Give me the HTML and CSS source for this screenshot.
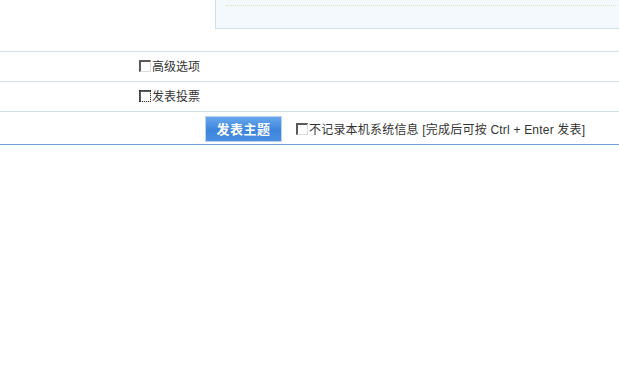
FILE: index.html
```
<!DOCTYPE html>
<html lang="zh-CN">
<head>
  <meta charset="UTF-8">
  <title>发表主题</title>
  <link rel="stylesheet" href="styles.css">
</head>
<body>
  <div class="editor-row">
    <div class="editor-box">
      <div class="editor-toolbar"></div>
    </div>
  </div>
  <div class="opt-row">
    <label class="opt"><input type="checkbox" class="chk">高级选项</label>
  </div>
  <div class="opt-row">
    <label class="opt"><input type="checkbox" class="chk chk-focus">发表投票</label>
  </div>
  <div class="submit-row">
    <button class="btn-post">发表主题</button>
    <label class="opt opt-wide"><input type="checkbox" class="chk">不记录本机系统信息 [完成后可按 Ctrl + Enter 发表]</label>
  </div>
</body>
</html>
```

FILE: styles.css
```
body {
  margin: 0;
  font-family: "Liberation Sans", "Noto Sans CJK SC", sans-serif;
  font-size: 12px;
  color: #333;
  background: #fff;
  overflow: hidden;
}
.editor-row {
  height: 51px;
  padding-left: 215px;
  overflow: hidden;
}
.editor-box {
  height: 60px;
  margin-top: -31px;
  margin-right: -10px;
  border: 1px solid #cfe0ea;
  background: #f4f9fe;
  box-sizing: border-box;
}
.editor-toolbar {
  height: 35px;
  margin: 0 10px;
  border-bottom: 1px dotted #e2e2c6;
}
.opt-row {
  height: 29px;
  border-top: 1px solid #cfe0ea;
  padding-left: 139px;
  display: flex;
  align-items: center;
}
.opt-row + .opt-row {
  padding-top: 1px;
  height: 28px;
}
.opt {
  display: flex;
  align-items: center;
  line-height: 14px;
  white-space: nowrap;
}
.opt-wide {
  letter-spacing: 0.2px;
  margin-top: 3px;
}
.chk {
  -webkit-appearance: none;
  appearance: none;
  width: 12px;
  height: 12px;
  margin: 0 1px 2px 0;
  background: #fff;
  border-top: 2px solid #5a5a5a;
  border-left: 2px solid #5a5a5a;
  border-right: 1px solid #dcdcdc;
  border-bottom: 1px solid #dcdcdc;
  box-sizing: border-box;
}
.chk-focus {
  outline: 1px dotted #333;
  outline-offset: -1px;
}
.submit-row {
  height: 32px;
  border-top: 1px solid #cfe0ea;
  border-bottom: 1px solid #6f9fd6;
  padding-left: 205px;
  display: flex;
  align-items: center;
}
.btn-post {
  width: 77px;
  height: 26px;
  margin: 1px 14px 0 0;
  padding: 0;
  border: 1px solid #b9d2ee;
  background: linear-gradient(#6aa8ee, #3c84dc 55%, #4a8fe2);
  color: #fff;
  font-family: "Noto Sans CJK SC", sans-serif;
  font-size: 13px;
  font-weight: bold;
  letter-spacing: 0.5px;
}
```
